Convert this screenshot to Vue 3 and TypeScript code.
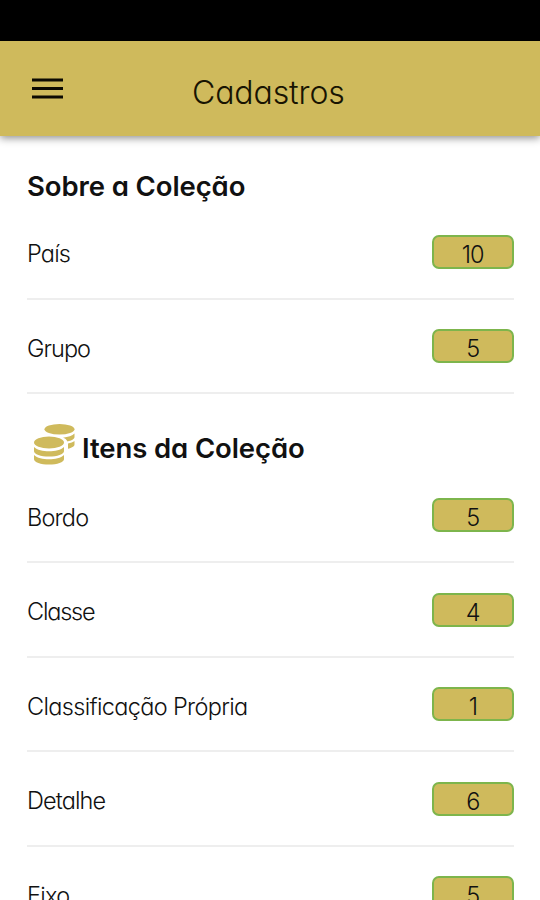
<script setup lang="ts">
interface Item {
  label: string
  count: number
  tracking: number
}

interface Section {
  title: string
  icon: boolean
  items: Item[]
}

const sections: Section[] = [
  {
    title: 'Sobre a Coleção',
    icon: false,
    items: [
      { label: 'País', count: 10, tracking: -0.8 },
      { label: 'Grupo', count: 5, tracking: -0.95 },
    ],
  },
  {
    title: 'Itens da Coleção',
    icon: true,
    items: [
      { label: 'Bordo', count: 5, tracking: -0.8 },
      { label: 'Classe', count: 4, tracking: -1.2 },
      { label: 'Classificação Própria', count: 1, tracking: -0.66 },
      { label: 'Detalhe', count: 6, tracking: -0.9 },
      { label: 'Eixo', count: 5, tracking: -0.75 },
    ],
  },
]
</script>

<template>
  <div class="screen">
    <div class="status"></div>
    <header class="bar">
      <svg class="menu" width="32" height="22" viewBox="0 0 32 22">
        <path d="M0 0.5h31v3H0zM0 9h31v3H0zM0 17.5h31v3H0z" fill="#0c0a02" />
      </svg>
      <h1>Cadastros</h1>
    </header>
    <main>
      <section v-for="s in sections" :key="s.title">
        <h2 :class="{ iconic: s.icon }">
          <svg v-if="s.icon" class="coins" width="42" height="42" viewBox="0 0 42 42" fill="#cfba5c">
            <ellipse cx="26.5" cy="5.3" rx="15" ry="5.3" />
            <path d="M41.500 9.500v3.500c0 2-3 3.700-7 4.400c-1-2-2.500-3-4.500-3.700c5-.6 9.500-2 11.500-4.200z" />
            <path d="M41.500 17v3.500c0 2-3 3.500-6.500 4.200v-5.200c2.600-.5 5.200-1.300 6.500-2.500z" />
            <ellipse cx="16" cy="18.500" rx="15" ry="6" />
            <path d="M1 23c3 3 9 4.300 15 4.300s12-1.300 15-4.300v4.200c0 3-6.700 5.300-15 5.300s-15-2.300-15-5.300z" />
            <path d="M1 31c3 3 9 4.300 15 4.300s12-1.300 15-4.300v4.200c0 3-6.700 5.300-15 5.300s-15-2.300-15-5.300z" />
          </svg>
          <span>{{ s.title }}</span>
        </h2>
        <ul>
          <li v-for="i in s.items" :key="i.label">
            <span class="label" :style="{ letterSpacing: i.tracking + 'px' }">{{ i.label }}</span>
            <span class="count">{{ i.count }}</span>
          </li>
        </ul>
      </section>
    </main>
  </div>
</template>

<style>
body {
  background: #fff;
  overflow: hidden;
}
</style>

<style scoped>
.screen {
  height: 900px;
  overflow: hidden;
  background: #fff;
  color: #111;
  font-family: Inter, 'Open Sans', sans-serif;
  font-feature-settings: 'cv11' 1;
}
.status {
  height: 41px;
  background: #000;
}
.bar {
  display: flex;
  height: 95px;
  background: #cfba5c;
  box-shadow: 0 2px 8px rgba(0, 0, 0, 0.45);
}
.menu {
  flex: none;
  margin: 37px 0 0 32px;
}
h1 {
  margin: 32px 0 0 128px;
  font-size: 32px;
  line-height: 40px;
  font-weight: 300;
  letter-spacing: -0.1px;
  color: #181402;
}
main {
  padding: 0 26.5px 0 27px;
}
h2 {
  display: flex;
  align-items: center;
  height: 69px;
  margin: 0;
  font-size: 27.5px;
  font-weight: 560;
  letter-spacing: -0.1px;
}
h2 span {
  padding-top: 31px;
}
h2.iconic {
  height: 74.5px;
}
h2.iconic span {
  padding-top: 34px;
}
.coins {
  margin: 27px 7px 0 6px;
}
ul {
  list-style: none;
  margin: 0;
  padding: 0;
}
li {
  box-sizing: border-box;
  display: flex;
  justify-content: space-between;
  align-items: center;
  height: 94.5px;
  padding-top: 1px;
  border-bottom: 2px solid #eee;
}
.label {
  padding-top: 4px;
  font-size: 23.5px;
  font-weight: 300;
}
.count {
  box-sizing: border-box;
  width: 81.5px;
  height: 34px;
  border: 2px solid #7db54c;
  border-radius: 7px;
  background: #cfba5c;
  font-size: 23.5px;
  line-height: 35px;
  font-weight: 300;
  letter-spacing: -1px;
  text-align: center;
}
</style>
